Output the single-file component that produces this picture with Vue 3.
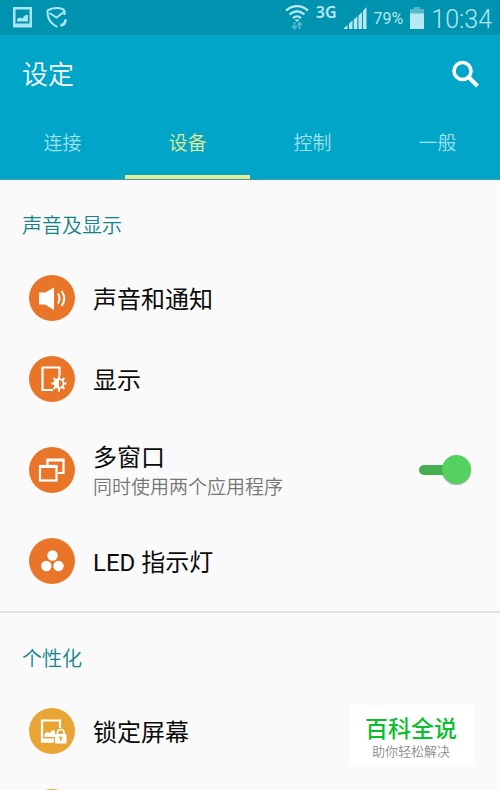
<template>
  <div class="screen">
    <header class="top">
      <div class="status-bar">
        <div class="status-left">
          <svg width="19" height="21" viewBox="0 0 19 21">
            <path fill="currentColor" fill-rule="evenodd" d="M0 0H19V20.5H0ZM2.5 2.5V16.5H16.5V2.5Z" />
            <path fill="currentColor" d="M4 14.5V12L6.5 10.5 9 11.5 12.5 8 15 8V14.5Z" />
          </svg>
          <svg width="22" height="21" viewBox="0 0 22 21" fill="none" stroke="currentColor" stroke-width="2">
            <path d="M10 19.500C4.500 16 1 11 1.500 3.500Q10-1 17.500 2.500L18.500 4.500 10.500 10.500 3.500 6" />
            <path d="M18.500 4V8M10 19.500H11.500" />
            <path d="M19.500 12.500C19.500 16 17.500 18 14.500 18.500" stroke-width="2.800" />
          </svg>
        </div>
        <div class="status-right">
          <svg width="24" height="25" viewBox="0 0 24 25" fill="none" stroke="currentColor" stroke-width="2.3">
            <path d="M1 5.500Q12-3.500 23 5.500M4.500 9.500Q12 3 19.500 9.500M8 13.200Q12 9.500 16 13.200" />
            <path d="M9.500 14.500H14.500L12 17Z" fill="currentColor" stroke="none" />
            <path class="dim" stroke-width="1.800" d="M9.500 17V23.500M7 21 9.500 23.700 12 21M14.500 24V17.500M12.500 20 14.500 17.500 17 20" />
          </svg>
          <span class="network">3G</span>
          <svg width="23" height="22" viewBox="0 0 23 22" fill="currentColor">
            <path d="M0 22V21L3.500 18V22ZM5 22V16.500L8.500 13.500V22ZM9.800 22V12.500L13.300 9.500V22ZM14.500 22V8.500L18 5V22ZM19 22V4L22.500 0V22Z" />
          </svg>
          <span class="percent">79%</span>
          <svg width="14" height="22" viewBox="0 0 14 22" fill="currentColor">
            <path class="dim" d="M4 0H10V2H14V7H0V2H4Z" />
            <path d="M0 6.500H14V22H0Z" />
          </svg>
          <span class="clock">10:34</span>
        </div>
      </div>

      <div class="title-bar">
        <h1>设定</h1>
        <button class="search" type="button" aria-label="搜索">
          <svg width="28" height="28" viewBox="0 0 28 28" fill="none" stroke="currentColor">
            <circle cx="10.500" cy="11" r="8.500" stroke-width="3.600" />
            <path d="M16.500 17L25.500 26" stroke-width="4" />
          </svg>
        </button>
      </div>

      <nav class="tabs">
        <button
          v-for="tab in tabs"
          :key="tab"
          type="button"
          class="tab"
          :class="{ active: tab === activeTab }"
          @click="activeTab = tab"
        >
          {{ tab }}
        </button>
      </nav>
    </header>

    <main class="content">
      <section v-for="section in sections" :key="section.title" class="section">
        <h2>{{ section.title }}</h2>
        <div v-for="item in section.items" :key="item.icon" class="row" :class="{ tall: item.desc }">
          <span class="icon" :class="section.color">
            <svg width="46" height="46" viewBox="0 0 46 46" fill="none" stroke="#fff">
              <g v-if="item.icon === 'sound'">
                <path d="M10 17.500H16L25 12.500V35L16 29.500H10Z" fill="#fff" stroke="none" />
                <path d="M29 18.500Q32 23.500 29 28.500M32.500 16Q38 23.500 32.500 31" stroke-width="2" />
              </g>
              <g v-else-if="item.icon === 'display'">
                <path d="M30.500 19.500V11.500H13.500V34H24" stroke-width="2.200" />
                <path d="M30 19.500V22M30 33V35.500M22.500 27.500H25M34.500 27.500H37.500M24.500 22 26.500 24M33.500 24 35.500 22M24.500 33 26.500 31M33.500 31 35.500 33" stroke-width="1.900" />
                <circle cx="30" cy="27.500" r="4.500" stroke-width="1.800" />
                <path d="M30 23A4.500 4.500 0 0 0 30 32Z" fill="#fff" stroke="none" />
              </g>
              <g v-else-if="item.icon === 'windows'" stroke-width="2.200">
                <path d="M18.500 18V12.500H34.500V26H29" />
                <path d="M17.500 13.500H35.500M10 20H28.500" stroke-width="2" />
                <rect x="11" y="19" width="16.500" height="14.500" />
              </g>
              <g v-else-if="item.icon === 'led'" fill="#fff" stroke="none">
                <circle cx="23.500" cy="17.500" r="5.200" />
                <circle cx="17.300" cy="28" r="5.200" />
                <circle cx="29.500" cy="28" r="5.200" />
              </g>
              <g v-else-if="item.icon === 'lock'">
                <path d="M31 20V12.500H13V33.500H24" stroke-width="2.200" />
                <path d="M15.500 29V26L18 24 20.500 25 24 22 26 23V29ZM12 30.500H25V34.500H12Z" fill="#fff" stroke="none" />
                <rect x="26" y="26" width="11.500" height="9.500" rx="1" fill="#fff" stroke="none" />
                <path d="M28.500 26.500V24.500Q28.500 21.500 31.700 21.500T35 24.500V26.500" stroke-width="1.700" />
                <path d="M31.700 29V33M30 29.500H33.500" stroke="#e9a534" stroke-width="1.500" />
              </g>
            </svg>
          </span>
          <label v-if="item.desc" class="text" for="multi-window">
            <span class="label">{{ item.label }}</span>
            <span class="desc">{{ item.desc }}</span>
          </label>
          <span v-else-if="item.label" class="text">
            <span class="label">{{ item.label }}</span>
          </span>
          <input v-if="item.desc" id="multi-window" v-model="multiWindow" class="switch" type="checkbox" />
        </div>
      </section>
    </main>

    <aside class="brand">
      <strong>百科全说</strong>
      <span>助你轻松解决</span>
    </aside>
  </div>
</template>

<script setup>
import { ref } from 'vue'

const tabs = ['连接', '设备', '控制', '一般']
const activeTab = ref('设备')
const multiWindow = ref(true)

const sections = [
  {
    title: '声音及显示',
    color: 'orange',
    items: [
      { icon: 'sound', label: '声音和通知' },
      { icon: 'display', label: '显示' },
      { icon: 'windows', label: '多窗口', desc: '同时使用两个应用程序' },
      { icon: 'led', label: 'LED 指示灯' }
    ]
  },
  {
    title: '个性化',
    color: 'amber',
    items: [
      { icon: 'lock', label: '锁定屏幕' },
      { icon: 'blank' }
    ]
  }
]
</script>

<style>
body {
  margin: 0;
  background: #fafafa;
}
</style>

<style scoped>
.screen {
  position: relative;
  display: flex;
  flex-direction: column;
  height: 100vh;
  overflow: hidden;
  background: #fafafa;
  color: #0a0a0a;
  font-family: Roboto, "Noto Sans CJK SC", sans-serif;
  font-weight: 350;
}

svg {
  display: block;
  flex: none;
}

button {
  padding: 0;
  border: 0;
  background: none;
  font-family: inherit;
  font-weight: inherit;
  cursor: pointer;
}

.top {
  flex: none;
  background: #00a5c8;
  border-bottom: 1px solid #3a9fae;
}

/* Status bar */
.status-bar {
  display: flex;
  justify-content: space-between;
  height: 35px;
  padding: 0 8px 0 13px;
  background: #0093b0;
  color: #a9e6f2;
}

.status-left,
.status-right {
  display: flex;
  align-items: center;
}

.status-left {
  gap: 14px;
}

.status-right {
  gap: 7px;
  color: #b8e8f1;
}

.dim {
  opacity: 0.45;
}

.network {
  align-self: flex-start;
  padding-top: 4px;
  font: 600 16px/16px "Noto Sans", sans-serif;
}

.percent {
  padding-top: 2px;
  font-size: 16px;
  font-weight: 400;
  line-height: 20px;
}

.clock {
  padding-top: 4px;
  font-size: 25px;
  font-weight: 300;
  line-height: 30px;
}

/* Title and tabs */
.title-bar {
  display: flex;
  align-items: center;
  justify-content: space-between;
  height: 78px;
  padding: 0 20px 0 22px;
  color: #fff;
}

h1 {
  margin: 0;
  padding-top: 2px;
  font-size: 26px;
  font-weight: inherit;
  line-height: 36px;
}

.search {
  color: #fff;
}

.tabs {
  display: grid;
  grid-template-columns: repeat(4, 1fr);
}

.tab {
  height: 66px;
  border-bottom: 4px solid transparent;
  color: #a0e2ef;
  font-size: 19px;
  line-height: 24px;
}

.tab.active {
  border-bottom-color: #e4ec95;
  color: #e4ec95;
}

/* Settings list */
.content {
  flex: 1;
  min-height: 0;
  overflow: hidden;
}

.section + .section {
  margin-top: 10px;
  border-top: 2px solid #e0e0e0;
}

h2 {
  margin: 0;
  padding: 33px 22px 18px;
  color: #16838c;
  font-size: 20px;
  font-weight: inherit;
  line-height: 26px;
}

.row {
  display: flex;
  align-items: center;
  gap: 18px;
  height: 81px;
  padding: 0 29px;
}

.row.tall {
  height: 101px;
}

.icon {
  flex: none;
  border-radius: 50%;
}

.orange {
  background: #e87528;
}

.amber {
  background: #e9a534;
}

.text {
  display: flex;
  flex: 1;
  flex-direction: column;
  padding-top: 4px;
}

.label {
  font-size: 24px;
  font-weight: 400;
  line-height: 32px;
}

.desc {
  color: #757575;
  font-size: 19px;
  line-height: 28px;
}

.switch {
  position: relative;
  flex: none;
  width: 52px;
  height: 32px;
  margin: 0;
  appearance: none;
  cursor: pointer;
}

.switch::before {
  content: "";
  position: absolute;
  top: 11px;
  left: 0;
  width: 40px;
  height: 10px;
  border-radius: 5px;
  background: #bbb;
}

.switch::after {
  content: "";
  position: absolute;
  top: 1px;
  left: 0;
  width: 29px;
  height: 29px;
  border-radius: 50%;
  background: #eee;
  box-shadow: 0 1px 1px rgba(0, 0, 0, 0.35);
}

.switch:checked::before {
  background: #46ad52;
}

.switch:checked::after {
  right: 0;
  left: auto;
  background: #55d160;
}

/* Brand card over the list */
.brand {
  position: absolute;
  right: 25px;
  bottom: 25px;
  display: flex;
  flex-direction: column;
  align-items: center;
  box-sizing: border-box;
  width: 125px;
  height: 60px;
  padding: 12px 3px 0 0;
  background: #fff;
}

.brand strong {
  color: #0bbf2e;
  font-size: 23px;
  font-weight: 500;
  line-height: 26px;
}

.brand span {
  color: #8c8c8c;
  font-size: 13px;
  line-height: 18px;
}
</style>
